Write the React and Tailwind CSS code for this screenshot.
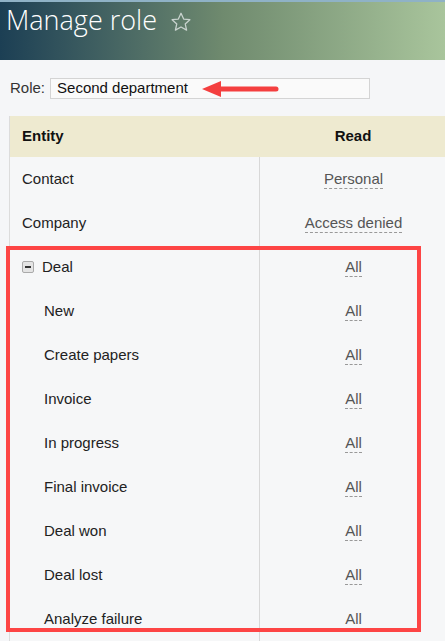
import React from 'react';

const rows = [
    { name: 'Contact', value: 'Personal' },
    { name: 'Company', value: 'Access denied' },
    { name: 'Deal', value: 'All', group: true },
    { name: 'New', value: 'All', sub: true },
    { name: 'Create papers', value: 'All', sub: true },
    { name: 'Invoice', value: 'All', sub: true },
    { name: 'In progress', value: 'All', sub: true },
    { name: 'Final invoice', value: 'All', sub: true },
    { name: 'Deal won', value: 'All', sub: true },
    { name: 'Deal lost', value: 'All', sub: true },
    { name: 'Analyze failure', value: 'All', sub: true },
];

function Star() {
    return (
        <svg width="22" height="22" viewBox="0 0 24 24" fill="none" stroke="#c9d3cf" strokeWidth="1.4" strokeLinejoin="round">
            <path d="M12 2.5l2.9 6.3 6.8.7-5.1 4.6 1.5 6.7L12 17.4l-6.1 3.4 1.5-6.7-5.1-4.6 6.8-.7z" />
        </svg>
    );
}

function Arrow() {
    return (
        <svg width="84" height="20" viewBox="0 0 84 20" className="ml-[14px]">
            <path d="M16 10H74" stroke="#f43f3f" strokeWidth="5" strokeLinecap="round" />
            <path d="M0 10L19 2V18Z" fill="#f43f3f" />
        </svg>
    );
}

export default function App() {
    return (
        <div className="relative w-[445px] h-[641px] overflow-hidden bg-[#f5f6f8] font-['Liberation_Sans',Arial,sans-serif] text-[#222]">
            <div className="h-[2px] bg-[#8fb2c6]" />
            <div className="h-[58px] bg-gradient-to-r from-[#1c3f54] via-[#6f8a6e] to-[#a9c59c] flex items-start pl-[6px] pt-[2px] gap-[13px]">
                <h1 className="font-['Open_Sans',sans-serif] font-light text-[27px] leading-[32px] text-white">Manage role</h1>
                <div className="mt-[7px]">
                    <Star />
                </div>
            </div>

            <div className="flex items-center h-[56px] pl-[10px] pt-[1px]">
                <span className="text-[15px] text-[#333]">Role:</span>
                <div className="ml-[5px] w-[320px] h-[21px] border border-[#d4d4d4] bg-[#fafafa] flex items-center pl-[6px]">
                    <span className="text-[15px] text-[#111]">Second department</span>
                    <Arrow />
                </div>
            </div>

            <div className="ml-[9px] w-[440px] border-l border-[#dcdcdc] bg-[#f6f7f8]">
                <div className="flex h-[41px] bg-[#eeead0] items-center font-bold text-[15px] text-[#111]">
                    <div className="w-[249px] pl-[12px]">Entity</div>
                    <div className="flex-1 text-center pr-[2px]">Read</div>
                </div>
                {rows.map((r) => (
                    <div key={r.name} className="flex h-[44px] text-[15px]">
                        <div className={`w-[249px] flex items-center ${r.sub ? 'pl-[34px]' : 'pl-[12px]'}`}>
                            {r.group && (
                                <span className="mr-[8px] w-[12px] h-[12px] rounded-[2px] border border-[#aaa] bg-[#e4e4e4] flex items-center justify-center">
                                    <span className="w-[6px] h-[1.5px] bg-[#333]" />
                                </span>
                            )}
                            <span className="text-[#222]">{r.name}</span>
                        </div>
                        <div className="flex-1 border-l border-[#d8d8d8] flex items-center justify-center pr-[2px]">
                            <span className="text-[#555] border-b border-dashed border-[#999] leading-[19px]">{r.value}</span>
                        </div>
                    </div>
                ))}
            </div>

            <div className="absolute left-[6px] top-[246px] w-[415px] h-[386px] border-[4px] border-[#fd4545] pointer-events-none" />
        </div>
    );
}
